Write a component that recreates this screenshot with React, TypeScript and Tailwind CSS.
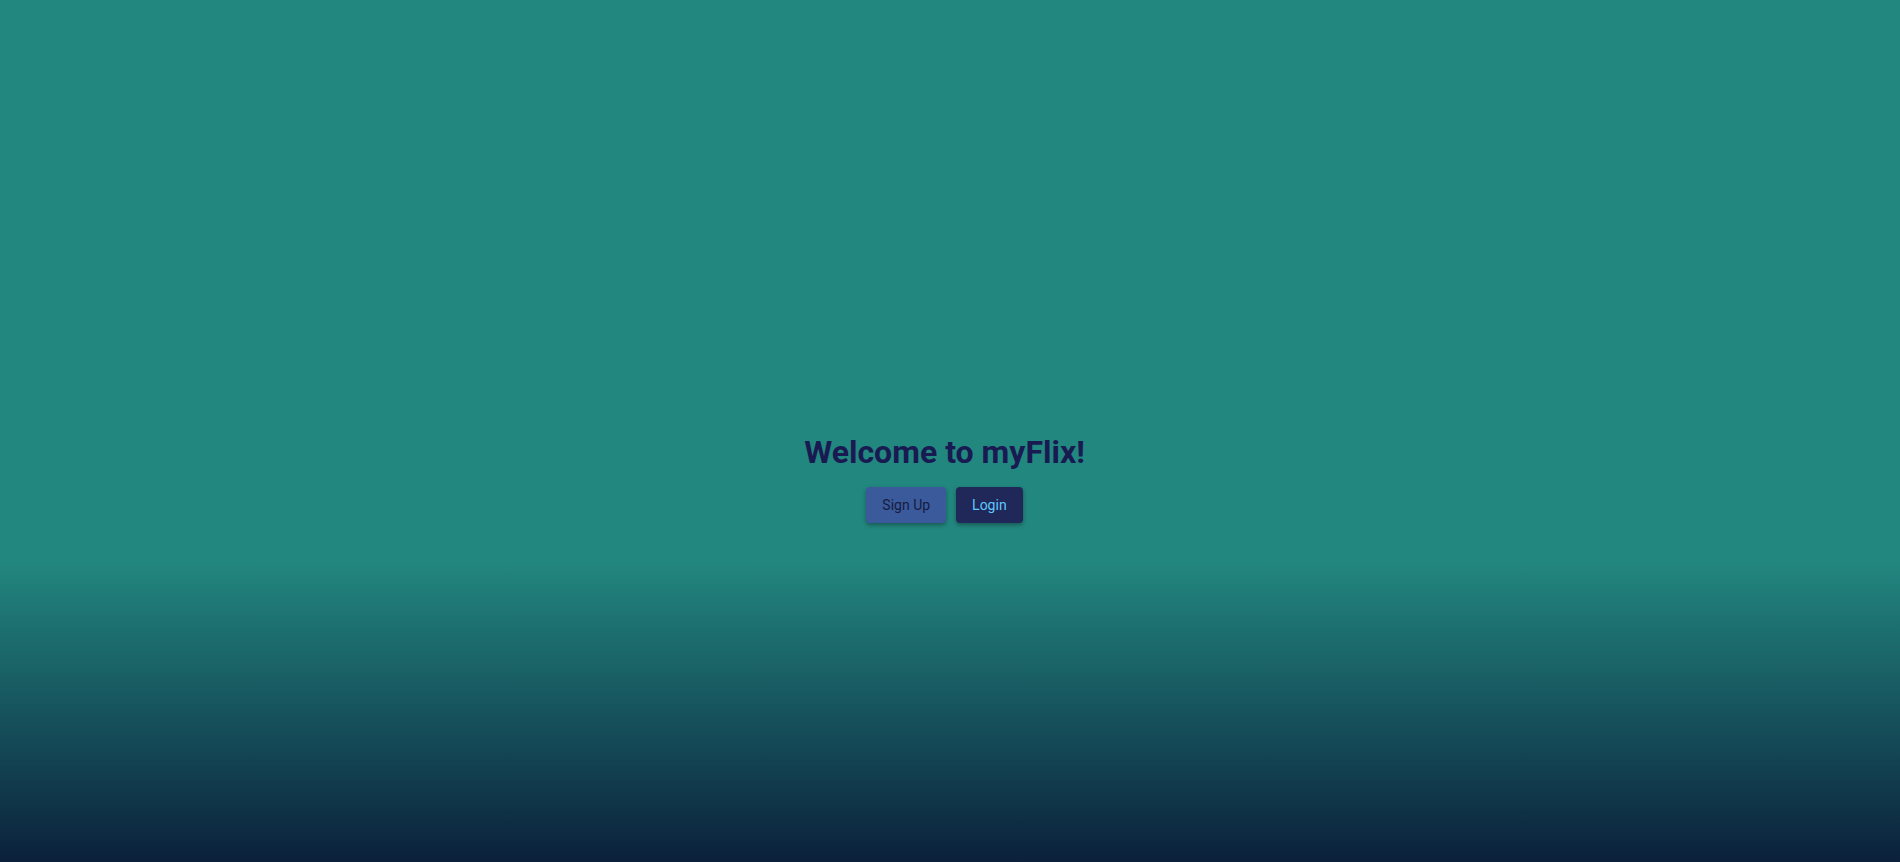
export default function App() {
  return (
    <div
      className="h-[862px] w-full bg-[linear-gradient(to_bottom,#22877f_0%,#22877f_65%,#0b203b_100%)] flex flex-col items-center pt-[433px] pr-[11px]"
      style={{ fontFamily: "Roboto, 'Liberation Sans', sans-serif" }}
    >
      <h1 className="text-[32px] leading-[38px] font-bold text-[#1a1a52]">Welcome to myFlix!</h1>
      <div className="mt-4 flex gap-[10px]">
        <button className="h-9 px-4 rounded-[4px] bg-[#3a5a9b] text-[14px] text-[#161a40] shadow-[0_2px_4px_rgba(0,0,0,0.35)]">
          Sign Up
        </button>
        <button className="h-9 px-4 rounded-[4px] bg-[#1f2859] text-[14px] text-[#5fc8ff] shadow-[0_2px_4px_rgba(0,0,0,0.35)]">
          Login
        </button>
      </div>
    </div>
  );
}
